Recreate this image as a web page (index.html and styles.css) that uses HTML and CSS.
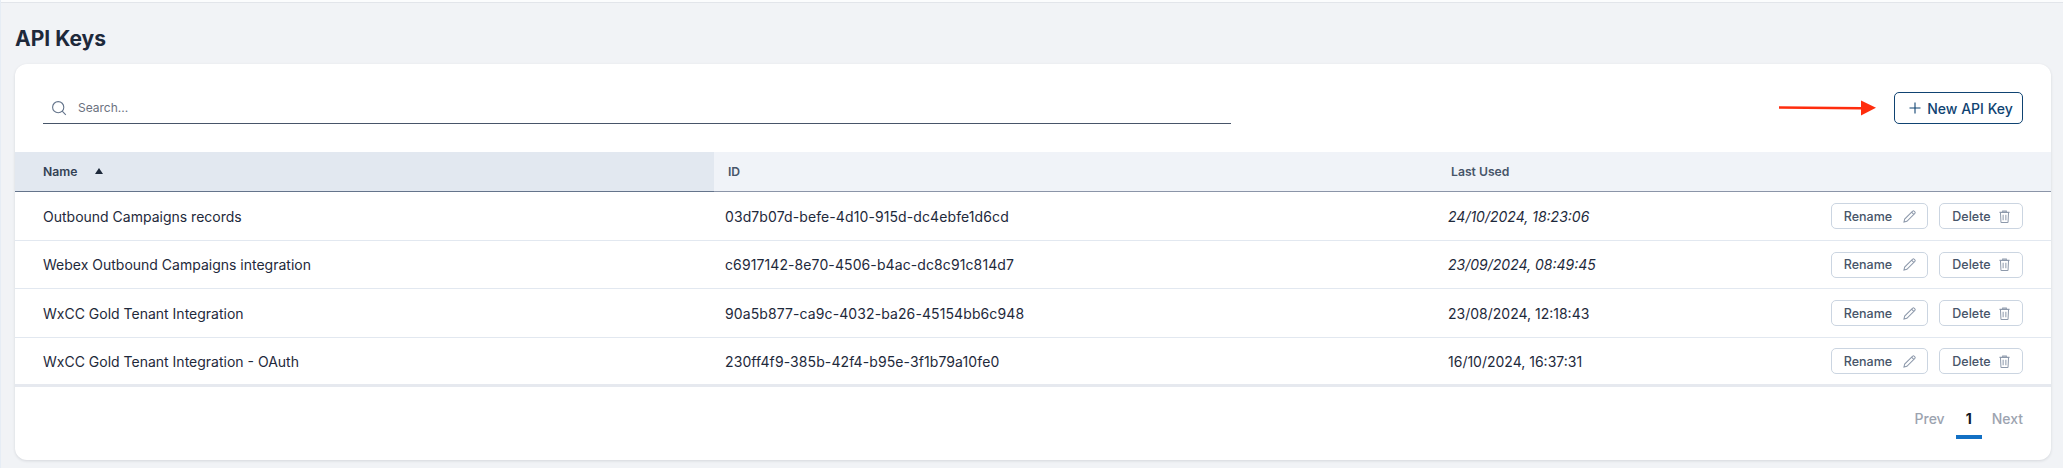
FILE: index.html
```html
<!DOCTYPE html>
<html lang="en">
<head>
<meta charset="utf-8">
<title>API Keys</title>
<link rel="stylesheet" href="styles.css">
</head>
<body>
<div class="topbar"></div>
<main class="page">
  <h1 class="title">API Keys</h1>
  <section class="card">
    <div class="toolbar">
      <label class="search">
        <svg class="search-icon" viewBox="0 0 16 16" width="16" height="16" fill="none" stroke="#64748b" stroke-width="1.1"><circle cx="7.2" cy="7.2" r="5.6"/><path d="M11.2 11.2l3.6 3.6"/></svg>
        <span class="placeholder">Search...</span>
      </label>
      <div class="new-wrap">
        <svg class="arrow" viewBox="0 0 98 16" width="98" height="16"><path d="M0 7.5L82 8.2" stroke="#ff2d0d" stroke-width="2.6" fill="none"/><path d="M82 0.5L97 7.8L82 15.5Z" fill="#ff2d0d"/></svg>
        <button class="btn-new"><svg viewBox="0 0 12 12" width="12" height="12" fill="none" stroke="#0f4372" stroke-width="1.1"><path d="M6 .5v11M.5 6h11"/></svg>New API Key</button>
      </div>
    </div>
    <table class="table">
      <thead>
        <tr>
          <th class="col-name sorted"><span>Name</span><i class="caret"></i></th>
          <th class="col-id">ID</th>
          <th class="col-used">Last Used</th>
          <th class="col-act"></th>
        </tr>
      </thead>
      <tbody>
        <tr>
          <td class="cell-name">Outbound Campaigns records</td>
          <td class="cell-id">03d7b07d-befe-4d10-915d-dc4ebfe1d6cd</td>
          <td class="cell-used recent">24/10/2024, 18:23:06</td>
          <td class="cell-act"><div class="actions"><button class="btn btn-rename">Rename<svg class="pencil" viewBox="0 0 14 14" width="13" height="13" fill="none" stroke="#8d99ab" stroke-width="1.1"><path d="M1 13l.8-3.2L10.4 1.2a1.1 1.1 0 0 1 1.6 0l.8.8a1.1 1.1 0 0 1 0 1.6L4.2 12.2zM9.2 2.4l2.4 2.4"/></svg></button><button class="btn btn-delete">Delete<svg class="trash" viewBox="0 0 12 14" width="11" height="13" fill="none" stroke="#8d99ab" stroke-width="1.1"><path d="M.5 2.5h11M4 2.5V1h4v1.5M1.6 2.5l.5 10.2q0 .8.8.8h6.2q.8 0 .8-.8l.5-10.2M4.5 5v6M7.5 5v6"/></svg></button></div></td>
        </tr>
        <tr>
          <td class="cell-name">Webex Outbound Campaigns integration</td>
          <td class="cell-id">c6917142-8e70-4506-b4ac-dc8c91c814d7</td>
          <td class="cell-used recent">23/09/2024, 08:49:45</td>
          <td class="cell-act"><div class="actions"><button class="btn btn-rename">Rename<svg class="pencil" viewBox="0 0 14 14" width="13" height="13" fill="none" stroke="#8d99ab" stroke-width="1.1"><path d="M1 13l.8-3.2L10.4 1.2a1.1 1.1 0 0 1 1.6 0l.8.8a1.1 1.1 0 0 1 0 1.6L4.2 12.2zM9.2 2.4l2.4 2.4"/></svg></button><button class="btn btn-delete">Delete<svg class="trash" viewBox="0 0 12 14" width="11" height="13" fill="none" stroke="#8d99ab" stroke-width="1.1"><path d="M.5 2.5h11M4 2.5V1h4v1.5M1.6 2.5l.5 10.2q0 .8.8.8h6.2q.8 0 .8-.8l.5-10.2M4.5 5v6M7.5 5v6"/></svg></button></div></td>
        </tr>
        <tr>
          <td class="cell-name">WxCC Gold Tenant Integration</td>
          <td class="cell-id">90a5b877-ca9c-4032-ba26-45154bb6c948</td>
          <td class="cell-used">23/08/2024, 12:18:43</td>
          <td class="cell-act"><div class="actions"><button class="btn btn-rename">Rename<svg class="pencil" viewBox="0 0 14 14" width="13" height="13" fill="none" stroke="#8d99ab" stroke-width="1.1"><path d="M1 13l.8-3.2L10.4 1.2a1.1 1.1 0 0 1 1.6 0l.8.8a1.1 1.1 0 0 1 0 1.6L4.2 12.2zM9.2 2.4l2.4 2.4"/></svg></button><button class="btn btn-delete">Delete<svg class="trash" viewBox="0 0 12 14" width="11" height="13" fill="none" stroke="#8d99ab" stroke-width="1.1"><path d="M.5 2.5h11M4 2.5V1h4v1.5M1.6 2.5l.5 10.2q0 .8.8.8h6.2q.8 0 .8-.8l.5-10.2M4.5 5v6M7.5 5v6"/></svg></button></div></td>
        </tr>
        <tr>
          <td class="cell-name">WxCC Gold Tenant Integration - OAuth</td>
          <td class="cell-id">230ff4f9-385b-42f4-b95e-3f1b79a10fe0</td>
          <td class="cell-used">16/10/2024, 16:37:31</td>
          <td class="cell-act"><div class="actions"><button class="btn btn-rename">Rename<svg class="pencil" viewBox="0 0 14 14" width="13" height="13" fill="none" stroke="#8d99ab" stroke-width="1.1"><path d="M1 13l.8-3.2L10.4 1.2a1.1 1.1 0 0 1 1.6 0l.8.8a1.1 1.1 0 0 1 0 1.6L4.2 12.2zM9.2 2.4l2.4 2.4"/></svg></button><button class="btn btn-delete">Delete<svg class="trash" viewBox="0 0 12 14" width="11" height="13" fill="none" stroke="#8d99ab" stroke-width="1.1"><path d="M.5 2.5h11M4 2.5V1h4v1.5M1.6 2.5l.5 10.2q0 .8.8.8h6.2q.8 0 .8-.8l.5-10.2M4.5 5v6M7.5 5v6"/></svg></button></div></td>
        </tr>
      </tbody>
    </table>
    <nav class="pager">
      <span class="pg">Prev</span>
      <span class="pg current">1</span>
      <span class="pg">Next</span>
    </nav>
  </section>
</main>
</body>
</html>
```
FILE: styles.css
```css
* { box-sizing: border-box; }
html, body { margin: 0; height: 100%; }
body {
  background: #f1f3f6;
  font-family: Inter, "Liberation Sans", sans-serif;
  color: #1e293b;
  border-left: 1px solid #e6edf5;
  overflow: hidden;
}
.topbar { height: 3px; background: #fbfcfd; border-bottom: 1px solid #e2e5ea; }
.page { padding: 0 12px 0 14px; }
.title {
  margin: 0;
  padding-top: 24px;
  height: 61px;
  font-size: 21px;
  line-height: 24px;
  font-weight: 700;
  color: #1e293b;
}
.card {
  background: #fff;
  border-radius: 12px;
  height: 396px;
  box-shadow: 0 1px 3px rgba(15, 23, 42, .12);
  overflow: hidden;
  display: flex;
  flex-direction: column;
}
.toolbar {
  height: 88px;
  padding: 0 28px;
  display: flex;
  justify-content: space-between;
  align-items: flex-start;
}
.search {
  width: 1188px;
  height: 60px;
  border-bottom: 1px solid #475569;
  display: flex;
  align-items: center;
  gap: 11px;
  padding: 28px 0 0 8px;
}
.placeholder { font-size: 12px; color: #6b7280; }
.search-icon { flex: none; }
.new-wrap { display: flex; align-items: center; gap: 17px; padding-top: 28px; }
.arrow { display: block; }
.btn-new {
  width: 129px;
  height: 32px;
  border: 1px solid #0f4372;
  border-radius: 5px;
  background: #fff;
  color: #0f4372;
  font: 500 14px Inter, sans-serif;
  display: flex;
  align-items: center;
  justify-content: center;
  gap: 6px;
  padding: 0 0 0 5px;
}
.table { width: 100%; border-collapse: separate; border-spacing: 0; table-layout: fixed; }
th {
  height: 40px;
  background: #f0f3f8;
  border-bottom: 1px solid #8b95a8;
  font-size: 12.2px;
  font-weight: 600;
  text-align: left;
  color: #475569;
  padding: 0;
}
.col-name { width: 699px; padding-left: 28px; background: #e2e8f0; color: #334155; border-bottom-color: #64748b; }
.col-id { width: 723px; padding-left: 14px; }
.col-used { width: 344px; padding-left: 14px; }
.caret {
  display: inline-block;
  margin-left: 18px;
  vertical-align: 2px;
  border-left: 4px solid transparent;
  border-right: 4px solid transparent;
  border-bottom: 6px solid #1e293b;
}
td {
  height: 49px;
  padding: 0;
  font-size: 14px;
  color: #1e293b;
  border-bottom: 1px solid #e2e8f0;
}
tbody tr:nth-child(2) td { height: 48px; }
tbody tr:last-child td { border-bottom: 3px solid #e6e9ef; }
.cell-name { padding-left: 28px; }
.cell-id { padding-left: 11px; letter-spacing: .1px; }
.cell-used { padding-left: 11px; }
.recent { font-style: italic; }
.actions { display: flex; justify-content: flex-end; gap: 11px; padding-right: 28px; }
.btn {
  height: 26px;
  border: 1px solid #cbd5e1;
  border-radius: 5px;
  background: #fff;
  color: #475569;
  font: 500 12.5px Inter, sans-serif;
  display: flex;
  align-items: center;
  justify-content: center;
  padding: 0;
}
.btn-rename { width: 97px; gap: 11px; padding-left: 1px; }
.btn-delete { width: 84px; gap: 8px; }
.pager {
  flex: 1;
  display: flex;
  justify-content: flex-end;
  padding: 18px 28px 0 0;
  font-size: 14px;
}
.pg { color: #9ca3af; font-weight: 500; height: 34px; padding-top: 5px; }
.current {
  width: 26px;
  margin: 0 10px 0 11px;
  text-align: center;
  color: #111827;
  font-weight: 700;
  border-bottom: 4px solid #1270c4;
}
```
